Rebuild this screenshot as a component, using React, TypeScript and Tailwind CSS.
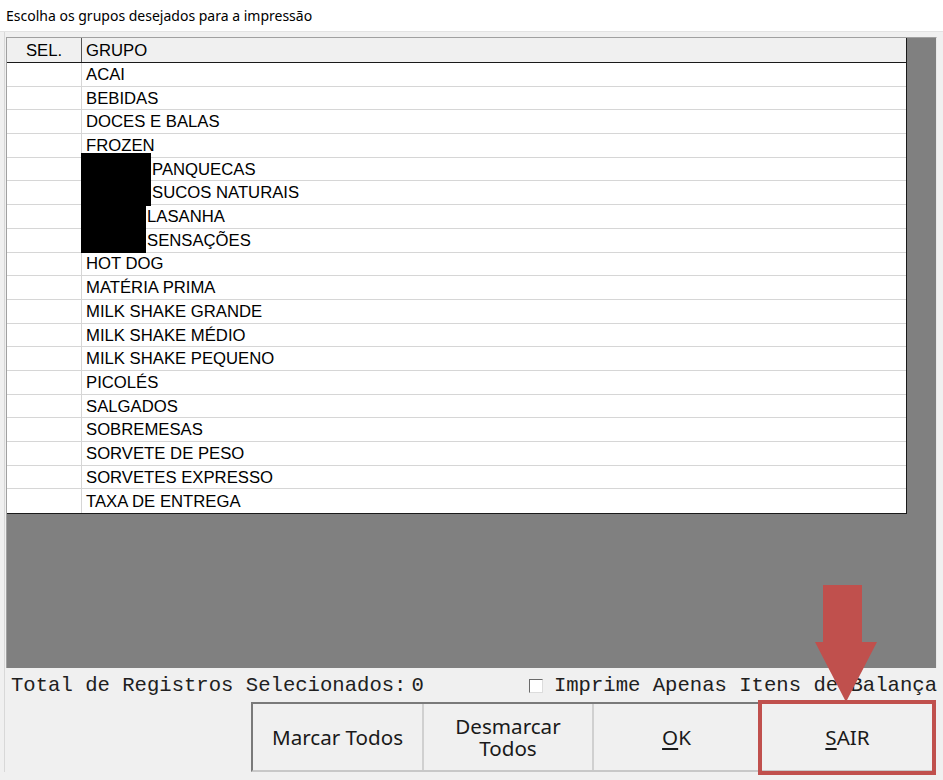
import React from "react";

const rows: { name: string; redact?: number }[] = [
  { name: "ACAI" },
  { name: "BEBIDAS" },
  { name: "DOCES E BALAS" },
  { name: "FROZEN" },
  { name: "PANQUECAS", redact: 70 },
  { name: "SUCOS NATURAIS", redact: 70 },
  { name: "LASANHA", redact: 65 },
  { name: "SENSAÇÕES", redact: 65 },
  { name: "HOT DOG" },
  { name: "MATÉRIA PRIMA" },
  { name: "MILK SHAKE GRANDE" },
  { name: "MILK SHAKE MÉDIO" },
  { name: "MILK SHAKE PEQUENO" },
  { name: "PICOLÉS" },
  { name: "SALGADOS" },
  { name: "SOBREMESAS" },
  { name: "SORVETE DE PESO" },
  { name: "SORVETES EXPRESSO" },
  { name: "TAXA DE ENTREGA" },
];

export default function App() {
  return (
    <div className="relative w-[943px] h-[780px] overflow-hidden bg-[#f0f0f0] font-['Noto_Sans',sans-serif]">
      {/* title bar */}
      <div className="h-[32px] bg-white border-b border-[#e3e3e3] flex items-center pl-[6px] text-[14px] text-black">
        Escolha os grupos desejados para a impressão
      </div>

      <div className="flex">
        {/* left strip */}
        <div className="w-[6px] flex">
          <div className="w-[4px]" />
          <div className="w-[1px] bg-[#d8d8d8]" />
        </div>

        <div className="flex flex-col">
          {/* grid */}
          <div className="mt-[5px] w-[931px] h-[631px] bg-[#808080] border-t border-l border-[#a0a0a0] border-r border-r-[#e8e8e8]">
            <div className="w-[900px] bg-white border-r border-b border-[#1a1a1a] font-['Liberation_Sans',sans-serif] text-[16.7px] text-black">
              <div className="flex h-[25px] bg-[#f0f0f0] border-b border-[#1a1a1a]">
                <div className="w-[75px] border-r border-[#555] flex items-center justify-center pt-[1px]">SEL.</div>
                <div className="flex-1 flex items-center pl-[4px] pt-[1px]">GRUPO</div>
              </div>
              {rows.map((r, i) => (
                <div
                  key={r.name}
                  className={`flex h-[23.7px] ${i < rows.length - 1 ? "border-b border-[#d6d6d6]" : ""}`}
                >
                  <div className="w-[75px] border-r border-[#d6d6d6]" />
                  <div className="flex-1 flex items-center pl-[4px] pt-[2px] leading-none">
                    {r.redact ? (
                      <span style={{ width: r.redact - 4 }} className="inline-block" />
                    ) : null}
                    <span>{r.name}</span>
                  </div>
                </div>
              ))}
            </div>
          </div>

          {/* status line */}
          <div className="h-[34px] pt-[2px] flex items-center font-['Liberation_Mono',monospace] text-[20.6px] text-[#202020]">
            <span className="ml-[5px]">Total de Registros Selecionados:</span>
            <span className="ml-[5px]">0</span>
            <div className="ml-auto flex items-center">
              <span className="w-[14px] h-[14px] bg-white border border-[#6a6a6a] border-r-[#dcdcdc] border-b-[#dcdcdc] mr-[11px]" />
              <span>Imprime Apenas Itens de Balança</span>
            </div>
          </div>

          {/* buttons */}
          <div className="ml-[245px] w-[685px] h-[70px] flex border-2 border-[#7a7a7a] border-r-[#c8c8c8] border-b-[#c8c8c8] text-[20.6px] text-[#1a1a1a] font-['Noto_Sans',sans-serif]">
            <div className="w-[171px] flex items-center justify-center border-r-2 border-[#d0d0d0] bg-[#f0f0f0]">
              Marcar Todos
            </div>
            <div className="w-[170px] flex flex-col items-center justify-center text-center border-r-2 border-[#d0d0d0] bg-[#f0f0f0]">
              <span className="block leading-[22px] h-[22px]">Desmarcar</span>
              <span className="block leading-[22px] h-[22px]">Todos</span>
            </div>
            <div className="w-[167px] flex items-center justify-center border-r-2 border-[#d0d0d0] bg-[#f0f0f0]">
              <span>
                <span className="underline underline-offset-[3px]">O</span>K
              </span>
            </div>
            <div className="flex-1 flex items-center justify-center bg-[#f0f0f0]">
              <span>
                <span className="underline underline-offset-[3px]">S</span>AIR
              </span>
            </div>
          </div>
        </div>
      </div>

      {/* redaction boxes */}
      <div className="absolute left-[81px] top-[153px] w-[70px] h-[53px] bg-black" />
      <div className="absolute left-[81px] top-[205px] w-[65px] h-[48px] bg-black" />

      {/* red highlight box */}
      <div className="absolute left-[758px] top-[700px] w-[178px] h-[75px] border-[4px] border-[#c0504d]" />

      {/* arrow */}
      <svg className="absolute left-0 top-0" width="943" height="780" viewBox="0 0 943 780">
        <polygon
          points="823,585 862,585 862,642 877,642 846,702 815,642 823,642"
          fill="#c0504d"
        />
      </svg>
    </div>
  );
}
